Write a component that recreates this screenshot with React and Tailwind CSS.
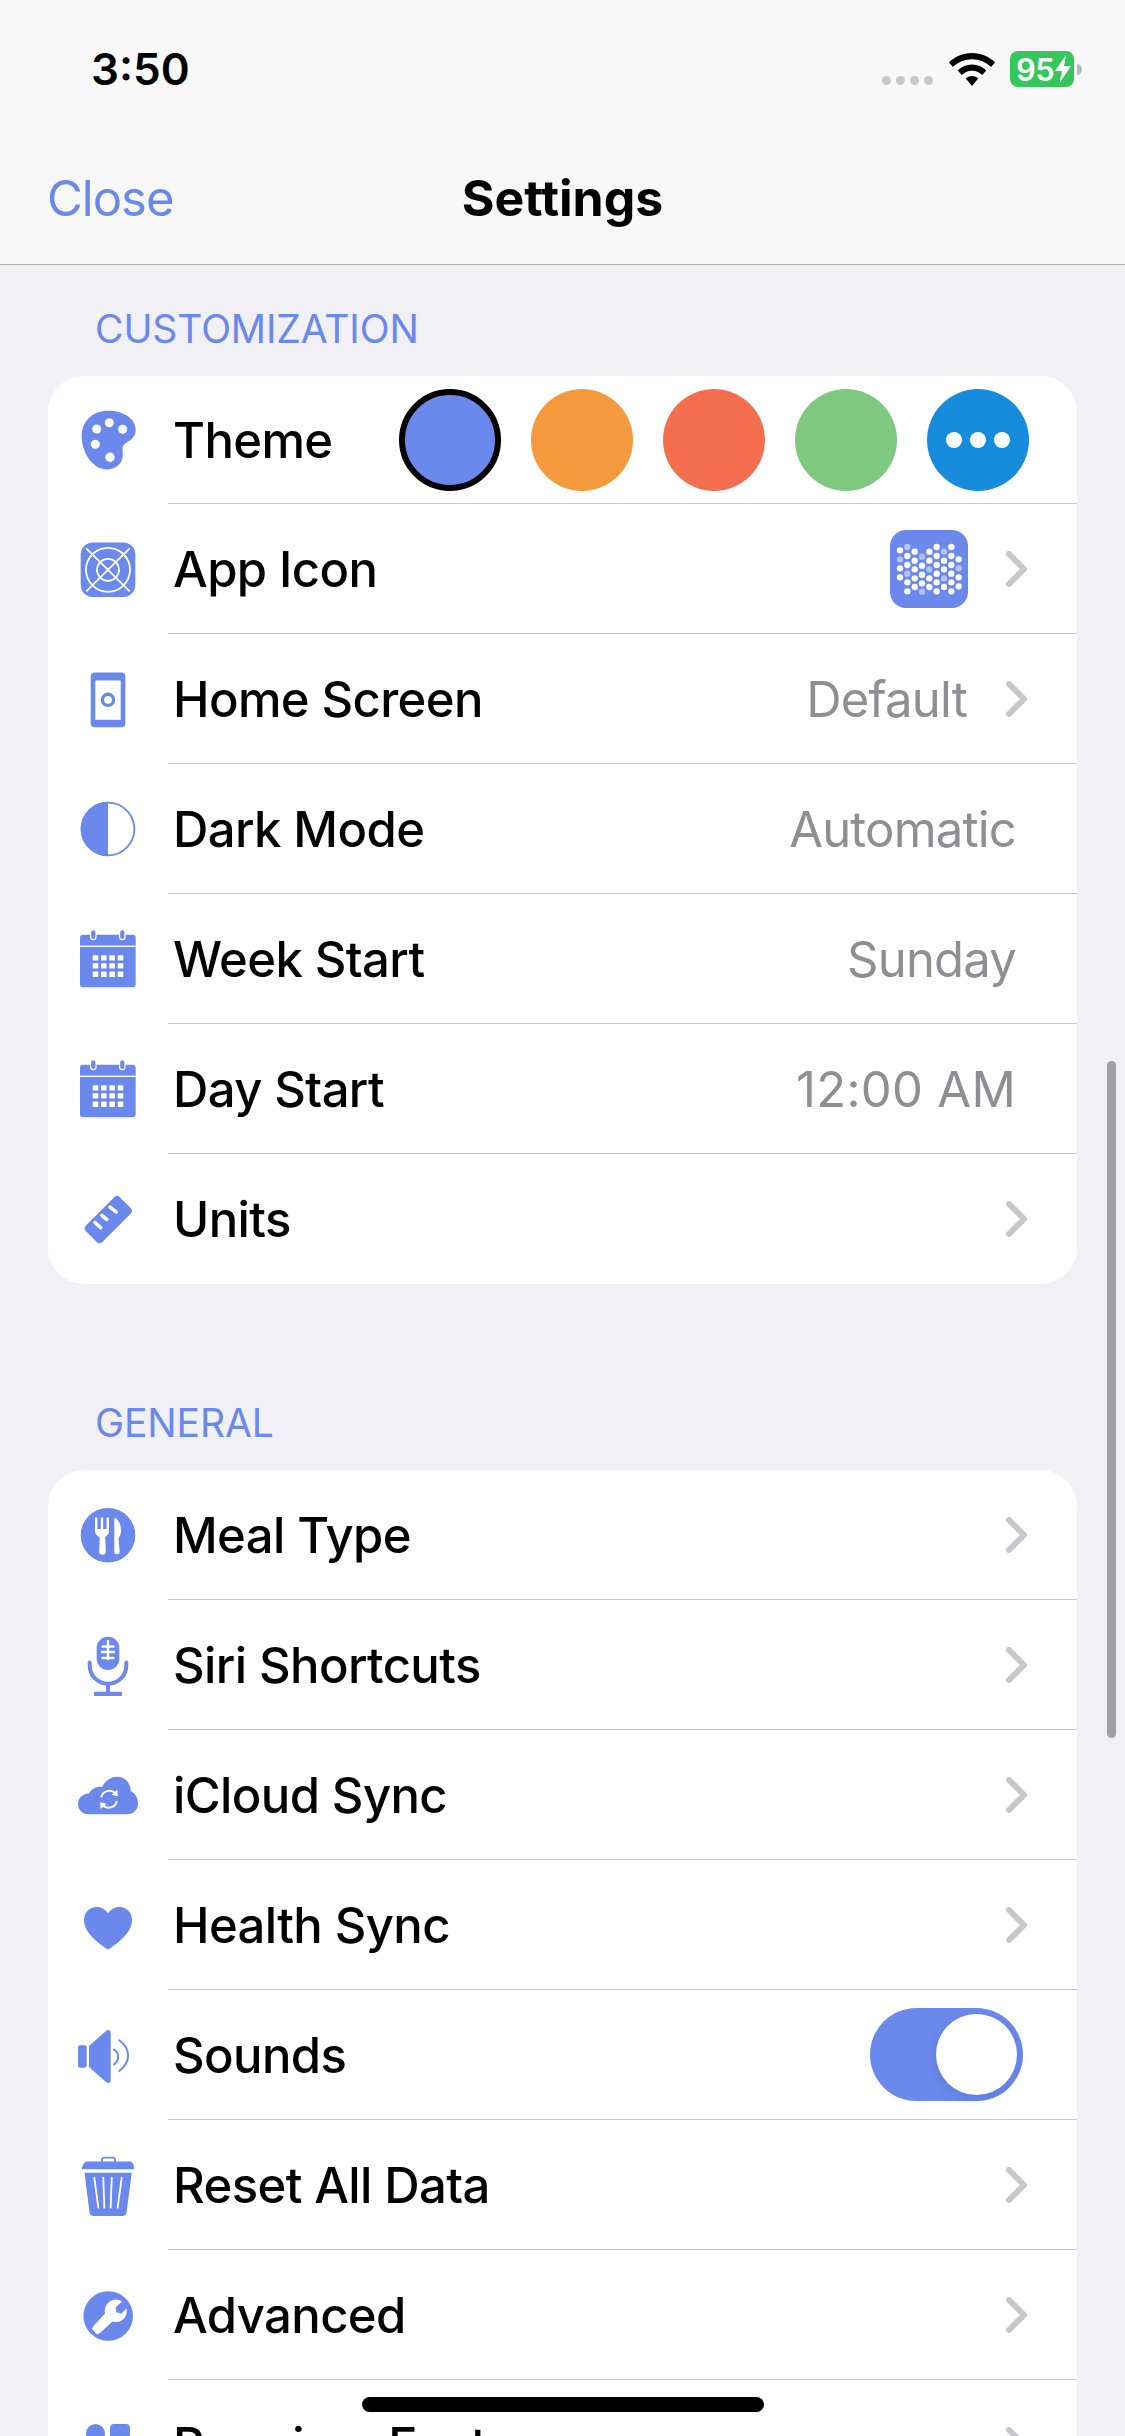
import React from "react";

const ACCENT = "#6b88ec";

function Svg({ children, className = "w-[60px] h-[60px]" }) {
    return (
        <svg viewBox="0 0 60 60" className={`${className} overflow-visible shrink-0`} fill={ACCENT}>
            {children}
        </svg>
    );
}

function PaletteIcon() {
    return (
        <Svg>
            <path d="M30 .8C46 .8 57.7 9 57.7 20 57.7 29 50 31 46.5 34 43.5 36.5 44.8 40 44.8 45 44.8 54 37 59.4 29 59.4 14 59.4 3.7 42 3.7 26 3.7 11 15 .8 30 .8Z" />
            <g fill="#fff">
                <circle cx="18.7" cy="19" r="4.5" />
                <circle cx="31.3" cy="12.7" r="4.5" />
                <circle cx="44.7" cy="19.3" r="4.5" />
                <circle cx="17.3" cy="34.3" r="4.5" />
                <circle cx="32" cy="47.3" r="4.7" />
            </g>
        </Svg>
    );
}

function AppIconIcon() {
    return (
        <Svg>
            <rect x="2.7" y="3.5" width="54.6" height="54.6" rx="12" />
            <g fill="none" stroke="#fff" strokeWidth="1.8">
                <circle cx="30" cy="30.8" r="22" />
                <circle cx="30" cy="30.8" r="11" />
                <path d="M8.7 9.8 51.2 51.8M51.2 9.8 8.7 51.8" strokeLinecap="round" />
            </g>
        </Svg>
    );
}

function PhoneIcon() {
    return (
        <Svg>
            <rect x="12.7" y="3.5" width="34.6" height="54.7" rx="4" />
            <rect x="17.3" y="11.5" width="25.4" height="39.3" fill="#fff" />
            <circle cx="30" cy="30.8" r="5.6" fill="none" stroke={ACCENT} strokeWidth="3.4" />
        </Svg>
    );
}

function HalfCircleIcon() {
    return (
        <Svg>
            <circle cx="30" cy="30" r="26.4" fill="none" stroke={ACCENT} strokeWidth="1.8" />
            <path d="M30 2.7A27.3 27.3 0 0 0 30 57.3Z" />
        </Svg>
    );
}

function CalendarIcon() {
    const xs = [14.7, 23, 31.3, 39.7];
    const ys = [26.2, 34.2, 42.5];
    return (
        <Svg>
            <rect x="2" y="5.8" width="55.7" height="52.4" rx="3" />
            <rect x="2" y="16.6" width="55.7" height="1.4" fill="#fff" />
            <rect x="12.6" y=".6" width="5.4" height="10" rx="2.7" stroke="#fff" strokeWidth="1.2" />
            <rect x="41.6" y=".6" width="5.4" height="10" rx="2.7" stroke="#fff" strokeWidth="1.2" />
            <g fill="#fff">
                {ys.map(y => xs.map(x => <rect key={`${x}-${y}`} x={x} y={y} width="5.6" height="5.4" rx=".6" />))}
            </g>
        </Svg>
    );
}

function RulerIcon() {
    return (
        <Svg>
            <rect x="6.3" y="19" width="48" height="23.2" rx="4" transform="rotate(-45 30.3 30.6)" />
            <path d="M17 33.5 22.7 38.8M24 26.5 28.7 30.3M32 18.2 38.3 23.2" stroke="#fff" strokeWidth="3.6" strokeLinecap="round" fill="none" />
        </Svg>
    );
}

function MealIcon() {
    return (
        <Svg>
            <circle cx="30" cy="30.3" r="27.3" />
            <path
                d="M17 12.5h2.4v11.5h3.4V12.5h2.4v11.5h3.4V12.5h2.4V26c0 3.500-2.400 5-3.800 6l.6 14.500a3.300 3.300 0 0 1-6.600 0l.6-14.500C19.400 31 17 29.500 17 26Z"
                fill="#fff"
            />
            <path d="M36.300 12.500C41 14 43.500 21 43 27c-.3 3.500-2.200 5-2.500 7l1.200 12.500a2.700 2.700 0 0 1-5.400 0Z" fill="#fff" />
        </Svg>
    );
}

function MicIcon() {
    return (
        <Svg>
            <rect x="18.7" y="1.7" width="22.6" height="33.3" rx="11.3" />
            <path d="M30 6v18M24.500 11.500h11M24 17h12M24.500 23h11" stroke="#fff" strokeWidth="2.4" strokeLinecap="round" fill="none" />
            <path d="M11.700 27.500v3a18.300 18.300 0 0 0 36.600 0v-3" fill="none" stroke={ACCENT} strokeWidth="4" strokeLinecap="round" />
            <rect x="28" y="48" width="4" height="9" />
            <rect x="16" y="56.7" width="28" height="4.3" rx="1" />
        </Svg>
    );
}

function CloudIcon() {
    return (
        <Svg>
            <path d="M11 49.300C4 49.300 0 44.500 0 39 0 33 5 28.500 11 28.500 14 23.500 19 21 24 22 27.500 15.500 33 11.700 39.500 11.700 47 11.700 52.500 18 52.800 26 57 28 60 33 60 38 60 44.500 56 49.300 49 49.300Z" />
            <g fill="none" stroke="#fff" strokeWidth="1.9">
                <path d="M23.200 32.500A8.300 8.300 0 0 1 37.500 28.500" />
                <path d="M38.800 36A8.300 8.300 0 0 1 24.500 40" />
            </g>
            <path d="M39.500 24.500 39.800 31.200 33.600 29.800ZM22.500 44 22.200 37.300 28.400 38.700Z" fill="#fff" />
        </Svg>
    );
}

function HeartIcon() {
    return (
        <Svg>
            <path d="M30 54.300C29 54.300 27.500 53.200 25 51.300 15 43.800 6 35.500 6 25 6 17.500 11.500 12 18.500 12 23.500 12 27.500 14.500 30 18.500 32.500 14.500 36.500 12 41.500 12 48.500 12 54 17.500 54 25 54 35.500 45 43.800 35 51.300 32.500 53.200 31 54.300 30 54.300Z" />
        </Svg>
    );
}

function SpeakerIcon() {
    return (
        <Svg>
            <rect x="0" y="20.3" width="8.7" height="22.4" rx="2" />
            <path d="M11 21 28 6C30 4 32.700 5 32.700 8V55C32.700 58 30 59 28 57L11 42Z" />
            <path d="M36 24.500C41.500 28 41.500 35.500 36 39.500M41.300 15.300C53 24 53 37 41.300 46" fill="none" stroke={ACCENT} strokeWidth="2" strokeLinecap="round" />
        </Svg>
    );
}

function TrashIcon() {
    return (
        <Svg>
            <rect x="24" y="2.6" width="13" height="6" rx="2" fill="none" stroke={ACCENT} strokeWidth="1.8" />
            <path d="M9 6.500H52C54.500 6.500 56.300 11 56.300 14.300H3.700C3.700 11 6.500 6.500 9 6.500Z" />
            <path d="M6.500 17.700H53.800L48.500 57.500C48.200 60 46.500 61 44.500 61H15.500C13.500 61 12 60 11.500 57.500Z" />
            <path d="M16.300 22.700 20.300 52.700M25.300 22.700 26.300 52.700M33.700 22.700 32.700 52.700M43.700 22.700 39.700 52.700" stroke="#fff" strokeWidth="1.8" strokeLinecap="round" fill="none" />
        </Svg>
    );
}

function WrenchIcon() {
    return (
        <Svg>
            <circle cx="30.2" cy="31" r="24.8" />
            <path
                d="M33.500 15.500C37 13.800 41.500 14.500 44 16.500L37.500 22.500 38.500 27.500 43.500 28.500 48.500 23.500C49.500 27.500 48 32 45 34.500 42 37 38 37.600 34.500 36.500L22 48 19 49.500 13.800 44 15.500 41 27 28.500C25.800 23 28.500 18 33.500 15.500Z"
                fill="#fff"
            />
        </Svg>
    );
}

function PremiumIcon() {
    return (
        <Svg>
            <circle cx="17.5" cy="18.5" r="9.5" />
            <rect x="32" y="9" width="20" height="20" rx="4" />
            <rect x="8" y="32" width="19" height="20" rx="4" />
            <circle cx="42" cy="42" r="10" />
        </Svg>
    );
}

function Chevron() {
    return (
        <svg viewBox="0 0 21 36" className="w-[21px] h-[36px] shrink-0" fill="none">
            <path d="M3 3 18 18 3 33" stroke="#c7c7cc" strokeWidth="6" strokeLinecap="round" strokeLinejoin="round" />
        </svg>
    );
}

const ICON_DOTS = [
    [30, [61, 88, 115, 142], [88]],
    [52, [51, 78, 105, 131, 157, 184], [51, 131]],
    [74, [65, 92, 118, 145, 171], []],
    [96, [80, 107, 134, 160, 185], [80, 185]],
    [118, [65, 92, 118, 145, 171], [118]],
    [140, [51, 78, 105, 131, 157, 184], []],
    [162, [65, 92, 118, 145, 171], [65, 145]],
    [184, [51, 78, 105, 131, 157, 184], []],
    [206, [88, 115, 142, 169], [115]],
];

function AppThumb() {
    return (
        <svg viewBox="0 0 234 234" className="w-[78px] h-[78px] shrink-0">
            <rect width="234" height="234" rx="48" fill={ACCENT} />
            {ICON_DOTS.map(([x, ys, light]) =>
                ys.map(y => <circle key={`${x}-${y}`} cx={x} cy={y} r="9.5" fill={light.includes(y) ? "#b4c3f6" : "#fff"} />)
            )}
        </svg>
    );
}

function Row({ icon, label, value, valueTracking = "tracking-[-0.8px]", chevron, height = "h-[130px]", last, right }) {
    return (
        <div className={`flex items-stretch ${height}`}>
            <div className="w-[120px] shrink-0 flex items-center justify-center">{icon}</div>
            <div className={`flex-1 flex items-center pl-[5px] ${last ? "" : "border-b border-[#c8c8cc]"}`}>
                <span className="text-[49px] leading-none font-[450] tracking-[-0.6px] text-black mt-[1px]">{label}</span>
                <div className="ml-auto flex items-center">
                    {right}
                    {value && (
                        <span className={`text-[49px] leading-none text-[#8e8e93] mt-[1px] ${valueTracking} ${chevron ? "mr-[39px]" : "mr-[61px]"}`}>{value}</span>
                    )}
                    {chevron && <span className="mr-[50px] flex"><Chevron /></span>}
                </div>
            </div>
        </div>
    );
}

function ThemeSwatches() {
    return (
        <div className="flex items-center gap-[30px] mr-[48px]">
            <div className="w-[102px] h-[102px] rounded-full bg-[#6b88ec] border-[6px] border-black" />
            <div className="w-[102px] h-[102px] rounded-full bg-[#f59a3c]" />
            <div className="w-[102px] h-[102px] rounded-full bg-[#f36e4f]" />
            <div className="w-[102px] h-[102px] rounded-full bg-[#7fc87f]" />
            <div className="w-[102px] h-[102px] rounded-full bg-[#178bdc] flex items-center justify-center gap-[8px]">
                <span className="w-[16px] h-[16px] rounded-full bg-white" />
                <span className="w-[16px] h-[16px] rounded-full bg-white" />
                <span className="w-[16px] h-[16px] rounded-full bg-white" />
            </div>
        </div>
    );
}

function Toggle() {
    return (
        <div className="mr-[54px] w-[153px] h-[93px] rounded-full bg-[#6b88ec] flex items-center justify-end pr-[6px]">
            <div className="w-[81px] h-[81px] rounded-full bg-white shadow-[-1px_4px_10px_rgba(50,70,150,0.18)]" />
        </div>
    );
}

function SectionLabel({ children, className }) {
    return (
        <div className={`flex items-end pl-[95px] pb-[24px] ${className}`}>
            <span className="text-[39px] leading-[46px] tracking-[-0.1px] text-[#6b88ec]">{children}</span>
        </div>
    );
}

function StatusBar() {
    return (
        <div className="h-[138px] flex items-center pl-[91px] pr-[43px]">
            <span className="text-[44px] leading-none font-semibold text-black">3:50</span>
            <div className="ml-auto flex items-center">
                <div className="flex gap-[5px] mt-[22px] mr-[16px]">
                    <span className="w-[9px] h-[9px] rounded-full bg-[#c8c8c8]" />
                    <span className="w-[9px] h-[9px] rounded-full bg-[#c8c8c8]" />
                    <span className="w-[9px] h-[9px] rounded-full bg-[#c8c8c8]" />
                    <span className="w-[9px] h-[9px] rounded-full bg-[#c8c8c8]" />
                </div>
                <svg viewBox="0 0 46 33" className="w-[46px] h-[33px] mr-[15px]" fill="#000">
                    <path d="M23 0C14 0 6 3.500 0 9.500L4 14C9 9 15.500 6.200 23 6.200 30.500 6.200 37 9 42 14L46 9.500C40 3.500 32 0 23 0Z" />
                    <path d="M23 11.500C17.500 11.500 12.500 13.700 8.700 17.500L12.800 22C15.500 19.300 19 17.800 23 17.800 27 17.800 30.500 19.300 33.200 22L37.300 17.500C33.500 13.700 28.500 11.500 23 11.500Z" />
                    <path d="M23 23C20.500 23 18.500 24 16.800 25.500L23 33 29.200 25.500C27.500 24 25.500 23 23 23Z" />
                </svg>
                <div className="w-[64px] h-[36px] rounded-[8px] bg-[#34c759] flex items-center pl-[6px] text-white text-[31px] leading-none font-semibold tracking-[-0.5px]">
                    95
                    <svg viewBox="0 0 16 28" className="w-[16px] h-[28px] ml-[1px] shrink-0" fill="#fff">
                        <path d="M11 0 0 16H7L4.500 28 16 11H9Z" />
                    </svg>
                </div>
                <span className="w-[5px] h-[11px] ml-[3px] rounded-r-full bg-[#b9b9b9]" />
            </div>
        </div>
    );
}

export default function App() {
    return (
        <div className="relative h-[2436px] overflow-hidden bg-[#f0f0f5] font-['Inter',sans-serif]">
            <header className="h-[265px] bg-[#f8f8f8] border-b border-[#b2b2b2] flex flex-col">
                <StatusBar />
                <div className="grid grid-cols-3 items-center h-[120px]">
                    <span className="pl-[47px] text-[49px] leading-none tracking-[-1px] text-[#6b88ec]">Close</span>
                    <span className="text-center text-[50px] leading-none font-bold text-black">Settings</span>
                </div>
            </header>

            <SectionLabel className="h-[111px]">CUSTOMIZATION</SectionLabel>
            <div className="mx-[48px] bg-white rounded-[36px] overflow-hidden">
                <Row height="h-[128px]" icon={<PaletteIcon />} label="Theme" right={<ThemeSwatches />} />
                <Row icon={<AppIconIcon />} label="App Icon" right={<span className="mr-[38px] flex"><AppThumb /></span>} chevron />
                <Row icon={<PhoneIcon />} label="Home Screen" value="Default" chevron />
                <Row icon={<HalfCircleIcon />} label="Dark Mode" value="Automatic" />
                <Row icon={<CalendarIcon />} label="Week Start" value="Sunday" />
                <Row icon={<CalendarIcon />} label="Day Start" value="12:00 AM" valueTracking="tracking-[0.3px]" />
                <Row last icon={<RulerIcon />} label="Units" chevron />
            </div>

            <SectionLabel className="h-[186px]">GENERAL</SectionLabel>
            <div className="mx-[48px] bg-white rounded-t-[36px]">
                <Row icon={<MealIcon />} label="Meal Type" chevron />
                <Row icon={<MicIcon />} label="Siri Shortcuts" chevron />
                <Row icon={<CloudIcon />} label="iCloud Sync" chevron />
                <Row icon={<HeartIcon />} label="Health Sync" chevron />
                <Row icon={<SpeakerIcon />} label="Sounds" right={<Toggle />} />
                <Row icon={<TrashIcon />} label="Reset All Data" chevron />
                <Row icon={<WrenchIcon />} label="Advanced" chevron />
                <Row icon={<PremiumIcon />} label="Premium Features" chevron />
            </div>

            <div className="absolute left-[1107px] top-[1061px] w-[9px] h-[677px] rounded-full bg-[#a0a0a4]" />
            <div className="absolute left-[362px] top-[2397px] w-[402px] h-[15px] rounded-full bg-black" />
        </div>
    );
}
